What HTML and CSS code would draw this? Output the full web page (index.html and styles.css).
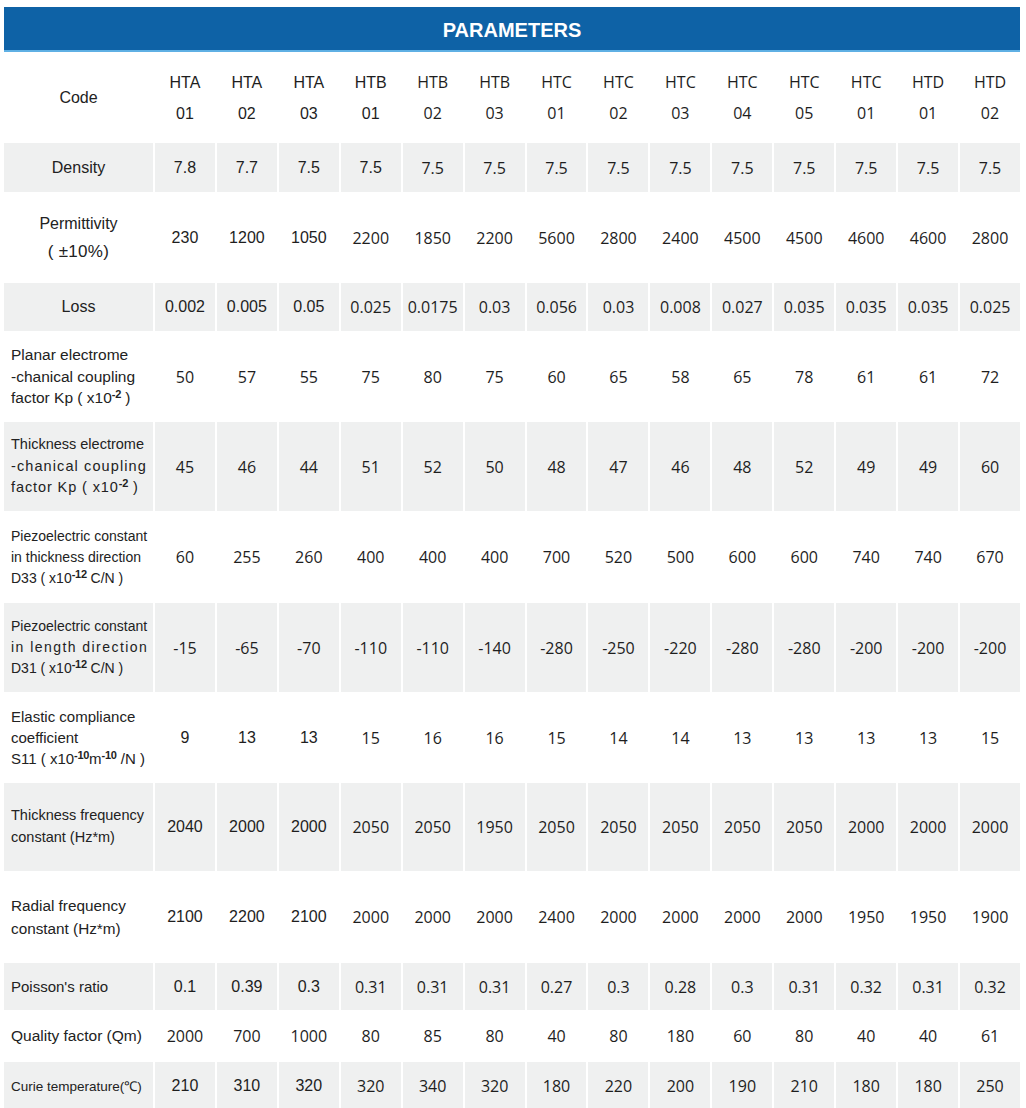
FILE: index.html
```html
<!DOCTYPE html>
<html lang="en">
<head>
<meta charset="utf-8">
<title>Parameters</title>
<link rel="stylesheet" href="styles.css">
</head>
<body>
<div class="page">
  <div class="title">PARAMETERS</div>

  <div class="row r-code">
    <div class="lab c f16">Code</div>
    <div class="v a code">HTA<br>01</div><div class="v a code">HTA<br>02</div><div class="v a code">HTA<br>03</div>
    <div class="v a code">HTB<br>01</div><div class="v code">HTB<br>02</div><div class="v code">HTB<br>03</div>
    <div class="v code">HTC<br>01</div><div class="v code">HTC<br>02</div><div class="v code">HTC<br>03</div>
    <div class="v code">HTC<br>04</div><div class="v code">HTC<br>05</div><div class="v code">HTC<br>01</div>
    <div class="v code">HTD<br>01</div><div class="v code">HTD<br>02</div>
  </div>

  <div class="row grey r-density">
    <div class="lab c f16">Density</div>
    <div class="v a">7.8</div><div class="v a">7.7</div><div class="v a">7.5</div><div class="v a">7.5</div>
    <div class="v">7.5</div><div class="v">7.5</div><div class="v">7.5</div><div class="v">7.5</div>
    <div class="v">7.5</div><div class="v">7.5</div><div class="v">7.5</div><div class="v">7.5</div>
    <div class="v">7.5</div><div class="v">7.5</div>
  </div>

  <div class="row r-perm">
    <div class="lab c f16 lh28"><div>Permittivity<br><span class="tol">( ±10%)</span></div></div>
    <div class="v a">230</div><div class="v a">1200</div><div class="v a">1050</div><div class="v">2200</div>
    <div class="v">1850</div><div class="v">2200</div><div class="v">5600</div><div class="v">2800</div>
    <div class="v">2400</div><div class="v">4500</div><div class="v">4500</div><div class="v">4600</div>
    <div class="v">4600</div><div class="v">2800</div>
  </div>

  <div class="row grey r-loss">
    <div class="lab c f16">Loss</div>
    <div class="v a">0.002</div><div class="v a">0.005</div><div class="v a">0.05</div><div class="v">0.025</div>
    <div class="v">0.0175</div><div class="v">0.03</div><div class="v">0.056</div><div class="v">0.03</div>
    <div class="v">0.008</div><div class="v">0.027</div><div class="v">0.035</div><div class="v">0.035</div>
    <div class="v">0.035</div><div class="v">0.025</div>
  </div>

  <div class="row r-planar">
    <div class="lab f155 lh22"><div>Planar electrome<br>-chanical coupling<br>factor Kp ( x10<sup class="sp">-2</sup> )</div></div>
    <div class="v">50</div><div class="v">57</div><div class="v">55</div><div class="v">75</div>
    <div class="v">80</div><div class="v">75</div><div class="v">60</div><div class="v">65</div>
    <div class="v">58</div><div class="v">65</div><div class="v">78</div><div class="v">61</div>
    <div class="v">61</div><div class="v">72</div>
  </div>

  <div class="row grey r-thick">
    <div class="lab f145 lh22"><div><span class="ln">Thickness electrome</span><span class="ln ls11">-chanical coupling</span><span class="ln ls09">factor Kp ( x10<sup class="sp">-2</sup> )</span></div></div>
    <div class="v">45</div><div class="v">46</div><div class="v">44</div><div class="v">51</div>
    <div class="v">52</div><div class="v">50</div><div class="v">48</div><div class="v">47</div>
    <div class="v">46</div><div class="v">48</div><div class="v">52</div><div class="v">49</div>
    <div class="v">49</div><div class="v">60</div>
  </div>

  <div class="row r-d33">
    <div class="lab f14 lh21"><div><span class="ln">Piezoelectric constant</span><span class="ln">in thickness direction</span><span class="ln">D33 ( x10<sup class="sp">-12</sup> C/N )</span></div></div>
    <div class="v">60</div><div class="v">255</div><div class="v">260</div><div class="v">400</div>
    <div class="v">400</div><div class="v">400</div><div class="v">700</div><div class="v">520</div>
    <div class="v">500</div><div class="v">600</div><div class="v">600</div><div class="v">740</div>
    <div class="v">740</div><div class="v">670</div>
  </div>

  <div class="row grey r-d31">
    <div class="lab f14 lh21"><div><span class="ln">Piezoelectric constant</span><span class="ln ls14">in length direction</span><span class="ln">D31 ( x10<sup class="sp">-12</sup> C/N )</span></div></div>
    <div class="v">-15</div><div class="v">-65</div><div class="v">-70</div><div class="v">-110</div>
    <div class="v">-110</div><div class="v">-140</div><div class="v">-280</div><div class="v">-250</div>
    <div class="v">-220</div><div class="v">-280</div><div class="v">-280</div><div class="v">-200</div>
    <div class="v">-200</div><div class="v">-200</div>
  </div>

  <div class="row r-elastic">
    <div class="lab f15 lh21"><div><span class="ln">Elastic compliance</span><span class="ln">coefficient</span><span class="ln">S11 ( x10<sup class="sp">-10</sup>m<sup class="sp">-10</sup> /N )</span></div></div>
    <div class="v a">9</div><div class="v a">13</div><div class="v a">13</div><div class="v">15</div>
    <div class="v">16</div><div class="v">16</div><div class="v">15</div><div class="v">14</div>
    <div class="v">14</div><div class="v">13</div><div class="v">13</div><div class="v">13</div>
    <div class="v">13</div><div class="v">15</div>
  </div>

  <div class="row grey r-tfreq">
    <div class="lab f145 lh22"><div>Thickness frequency<br>constant (Hz*m)</div></div>
    <div class="v a">2040</div><div class="v a">2000</div><div class="v a">2000</div><div class="v">2050</div>
    <div class="v">2050</div><div class="v">1950</div><div class="v">2050</div><div class="v">2050</div>
    <div class="v">2050</div><div class="v">2050</div><div class="v">2050</div><div class="v">2000</div>
    <div class="v">2000</div><div class="v">2000</div>
  </div>

  <div class="row r-rfreq">
    <div class="lab f153 lh23"><div>Radial frequency<br>constant (Hz*m)</div></div>
    <div class="v a">2100</div><div class="v a">2200</div><div class="v a">2100</div><div class="v">2000</div>
    <div class="v">2000</div><div class="v">2000</div><div class="v">2400</div><div class="v">2000</div>
    <div class="v">2000</div><div class="v">2000</div><div class="v">2000</div><div class="v">1950</div>
    <div class="v">1950</div><div class="v">1900</div>
  </div>

  <div class="row grey r-poisson">
    <div class="lab f15">Poisson's ratio</div>
    <div class="v a">0.1</div><div class="v a">0.39</div><div class="v a">0.3</div><div class="v">0.31</div>
    <div class="v">0.31</div><div class="v">0.31</div><div class="v">0.27</div><div class="v">0.3</div>
    <div class="v">0.28</div><div class="v">0.3</div><div class="v">0.31</div><div class="v">0.32</div>
    <div class="v">0.31</div><div class="v">0.32</div>
  </div>

  <div class="row r-quality">
    <div class="lab f155">Quality factor (Qm)</div>
    <div class="v">2000</div><div class="v">700</div><div class="v">1000</div><div class="v">80</div>
    <div class="v">85</div><div class="v">80</div><div class="v">40</div><div class="v">80</div>
    <div class="v">180</div><div class="v">60</div><div class="v">80</div><div class="v">40</div>
    <div class="v">40</div><div class="v">61</div>
  </div>

  <div class="row grey r-curie">
    <div class="lab f135">Curie temperature(℃)</div>
    <div class="v a">210</div><div class="v a">310</div><div class="v a">320</div><div class="v">320</div>
    <div class="v">340</div><div class="v">320</div><div class="v">180</div><div class="v">220</div>
    <div class="v">200</div><div class="v">190</div><div class="v">210</div><div class="v">180</div>
    <div class="v">180</div><div class="v">250</div>
  </div>
</div>
</body>
</html>
```
FILE: styles.css
```css
html, body {
  margin: 0;
  padding: 0;
  background: #ffffff;
}

body {
  font-family: "Liberation Sans", Arial, sans-serif;
  color: #222222;
}

.page {
  padding: 7px 6px 0 4px;
}

.title {
  height: 45px;
  box-sizing: border-box;
  padding-top: 4px;
  background: #0e62a6;
  border-bottom: 2px solid #5fb0e4;
  color: #ffffff;
  font-weight: bold;
  font-size: 20px;
  display: flex;
  align-items: center;
  justify-content: center;
}

.row {
  display: grid;
  grid-template-columns: 149px repeat(14, 1fr);
  column-gap: 2px;
}

.row.grey > div {
  background: #eff0f0;
}

.r-code { height: 91px; }
.r-density { height: 49px; }
.r-perm { height: 91px; }
.r-loss { height: 48px; }
.r-planar { height: 91px; }
.r-thick { height: 89px; }
.r-d33 { height: 92px; }
.r-d31 { height: 89px; }
.r-elastic { height: 91px; }
.r-tfreq { height: 88px; }
.r-rfreq { height: 92px; }
.r-poisson { height: 47px; }
.r-quality { height: 52px; }
.r-curie { height: 48px; }

.lab {
  display: flex;
  align-items: center;
  justify-content: flex-start;
  padding-left: 7px;
  color: #222222;
  white-space: nowrap;
}

.lab.c {
  justify-content: center;
  padding-left: 0;
  text-align: center;
}

.tol {
  font-size: 17px;
  letter-spacing: 0.3px;
}

.ln {
  display: block;
}

.f16 { font-size: 16px; }
.f155 { font-size: 15.5px; }
.f153 { font-size: 15.3px; }
.f15 { font-size: 15px; }
.f145 { font-size: 14.5px; }
.f14 { font-size: 14px; }
.f135 { font-size: 13.5px; }

.lh21 { line-height: 21px; }
.lh22 { line-height: 21.7px; }
.lh23 { line-height: 23px; }
.lh28 { line-height: 28px; }

.ls09 { letter-spacing: 0.9px; }
.ls11 { letter-spacing: 1.1px; }
.ls14 { letter-spacing: 1.45px; }

.sp {
  font-size: 11px;
  font-weight: bold;
  vertical-align: 5px;
  line-height: 0;
  letter-spacing: -0.3px;
}

.v {
  display: flex;
  align-items: center;
  justify-content: center;
  text-align: center;
  font-family: "Open Sans", "Liberation Sans", sans-serif;
  font-size: 16px;
  color: #1e1e1e;
  white-space: nowrap;
}

.v.a {
  font-family: "Liberation Sans", Arial, sans-serif;
}

.v.code {
  line-height: 31px;
}
```
